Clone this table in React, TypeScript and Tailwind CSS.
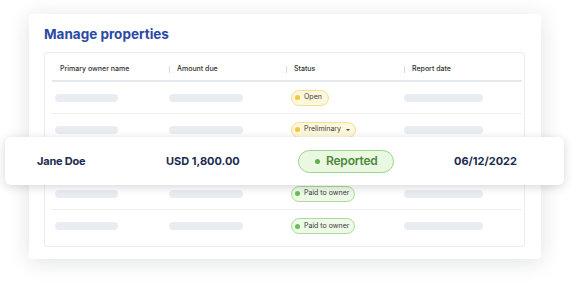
import React from "react"

type Row = {
  status: "open" | "prelim" | "paid" | "covered"
}

// the third row sits under the lifted card, so it has no visible badge
const rows: Row[] = [
  { status: "open" },
  { status: "prelim" },
  { status: "covered" },
  { status: "paid" },
  { status: "paid" },
]

function Skeleton({ w, ml }: { w: string; ml: string }) {
  return <div className={`h-[8px] rounded-full bg-[#e9edf2] ${w} ${ml}`} />
}

function Badge({ status }: { status: Row["status"] }) {
  if (status === "covered") {
    return <div className="ml-[5px] h-[16px] w-[60px] rounded-full border border-[#a9dc98] bg-[#eef9e8]" />
  }
  if (status === "open") {
    return (
      <div className="ml-[5px] flex h-[16px] items-center gap-[4px] rounded-full border border-[#f3df96] bg-[#fdf7dc] pl-[3px] pr-[6px]">
        <span className="h-[5px] w-[5px] rounded-full bg-[#f2c73c]" />
        <span className="text-[7px] text-[#3b3b3b]">Open</span>
      </div>
    )
  }
  if (status === "prelim") {
    return (
      <div className="ml-[5px] flex h-[16px] items-center gap-[4px] rounded-full border border-[#f3df96] bg-[#fdf7dc] pl-[3px] pr-[5px]">
        <span className="h-[5px] w-[5px] rounded-full bg-[#f2c73c]" />
        <span className="text-[7px] text-[#3b3b3b]">Preliminary</span>
        <span className="ml-[1px] h-0 w-0 border-x-[2px] border-t-[2.5px] border-x-transparent border-t-[#444]" />
      </div>
    )
  }
  return (
    <div className="ml-[5px] flex h-[16px] items-center gap-[4px] rounded-full border border-[#a9dc98] bg-[#eef9e8] pl-[3px] pr-[5px]">
      <span className="h-[5px] w-[5px] rounded-full bg-[#6cbd58]" />
      <span className="text-[7px] text-[#3b3b3b]">Paid to owner</span>
    </div>
  )
}

function HeadCell({ label, sep }: { label: string; sep: boolean }) {
  return (
    <div className="flex items-center">
      {sep ? <span className="h-[7px] w-px bg-[#d6d9de]" /> : <span className="w-px" />}
      <span className="ml-[7px] text-[7px] font-medium text-[#2f2f2f]">{label}</span>
    </div>
  )
}

export default function App() {
  return (
    <div className="relative h-[284px] w-[579px] overflow-hidden bg-white font-['Inter',sans-serif]">
      <div className="pl-[29px] pt-[14px]">
        <div className="h-[245px] w-[512px] rounded-[3px] bg-white px-[15px] pt-[11px] shadow-[0_3px_22px_rgba(20,30,50,0.13)]">
          <h1 className="text-[13.5px] font-bold leading-[19px] text-[#2a4aa3]">Manage properties</h1>

          <div className="mt-[8px] h-[195px] w-[481px] rounded-[3px] border border-[#eaecef] pl-[7px] pr-[2px]">
            <div className="grid h-[29px] grid-cols-[117px_117px_118px_118px] border-b-2 border-[#e4e7eb] pt-[5px]">
              <HeadCell label="Primary owner name" sep={false} />
              <HeadCell label="Amount due" sep />
              <HeadCell label="Status" sep />
              <HeadCell label="Report date" sep />
            </div>

            {rows.map((row, i) => (
              <div
                key={i}
                className={`grid h-[32px] grid-cols-[117px_117px_118px_118px] items-center ${
                  i < rows.length - 1 ? "border-b border-[#eceef1]" : ""
                }`}
              >
                <Skeleton w="w-[63px]" ml="ml-[3px]" />
                <Skeleton w="w-[74px]" ml="ml-0" />
                <div className="flex">
                  <Badge status={row.status} />
                </div>
                <Skeleton w="w-[79px]" ml="ml-0" />
              </div>
            ))}
          </div>
        </div>
      </div>

      {/* highlighted row lifted over the table */}
      <div className="absolute left-[5px] top-[137px] flex h-[48px] w-[559px] items-center rounded-[6px] bg-white pl-[32px] shadow-[0_2px_10px_rgba(20,30,50,0.18)]">
        <div className="w-[129px] text-[11px] font-bold tracking-[-0.2px] text-[#1c2b4e]">Jane Doe</div>
        <div className="w-[132px] text-[11px] font-bold text-[#1c2b4e]">USD 1,800.00</div>
        <div className="w-[156px]">
          <div className="flex h-[23px] w-[96px] items-center gap-[6px] rounded-full border border-[#9bd58a] bg-[#eaf8e2] pl-[16px]">
            <span className="h-[5px] w-[5px] rounded-full bg-[#5fae4c]" />
            <span className="text-[12px] font-semibold tracking-[-0.2px] text-[#4b8a3c]">Reported</span>
          </div>
        </div>
        <div className="text-[11px] font-bold text-[#1c2b4e]">06/12/2022</div>
      </div>
    </div>
  )
}
